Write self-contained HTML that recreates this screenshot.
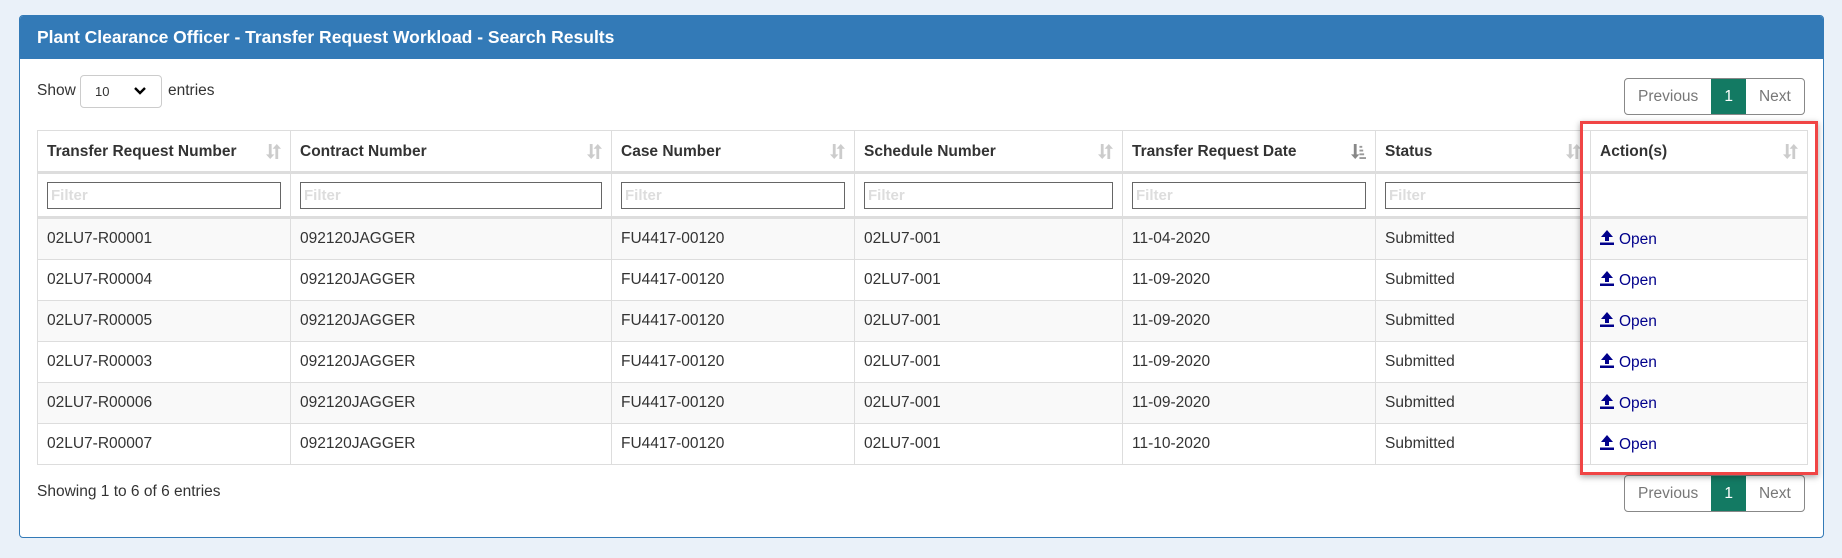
<!DOCTYPE html>
<html><head><style>
body{margin:0;width:1842px;height:558px;background:#eaf1f9;font-family:"Liberation Sans",Arial,sans-serif;position:relative;overflow:hidden;color:#333}
.panel{position:absolute;left:19px;top:15px;width:1803px;height:521px;background:#fff;border:1px solid #337ab7;border-radius:4px;overflow:hidden}
.ph{height:43px;background:#337ab7;color:#fff;font-weight:bold;font-size:17.5px;line-height:43px;padding-left:17px}
.abs{position:absolute}
.show{left:17px;top:66px;font-size:15.5px}
.sel{left:60px;top:59px;width:80px;height:31px;border:1px solid #ccc;border-radius:4px;font-size:13px}
.pg{display:flex;border:1px solid #888;border-radius:4px;overflow:hidden;height:35px;font-size:15.5px;line-height:35px;color:#777}
.pg div{padding:0 13px}
.pg .a{background:#137a63;color:#fff;padding:0 13px}
table{position:absolute;left:17px;top:114px;border-collapse:collapse;table-layout:fixed;width:1770px;font-size:15.5px}
td,th{border:1px solid #ddd;padding:0 9px;text-align:left;white-space:nowrap;overflow:hidden}
th{height:39px;font-weight:bold;position:relative;border-bottom:3px solid #ddd;padding-top:1px}
th .s{position:absolute;right:9px;top:12px}
tr.f td{height:42px;border-bottom:3px solid #ddd}
.in{height:25px;border:1px solid #666;color:#ddd;font-weight:bold;font-size:15px;line-height:26px;padding-left:3px}
tbody tr td{height:40px}
tbody tr:nth-child(odd) td{background:#f9f9f9}
a{color:#00008b;text-decoration:none}
a svg{vertical-align:-1px;margin-right:5px}
.red{position:absolute;left:1580px;top:121px;width:232px;height:348px;border:3px solid #f04545;box-shadow:0 2px 6px rgba(0,0,0,.35)}
</style></head><body>
<svg width="0" height="0" style="position:absolute"><defs>
<symbol id="sr" viewBox="0 0 16 18"><path d="M3 1h3v11h3l-4.5 5L0 12h3z" fill="#ccc"/><path d="M10 17h3V6h3L11.5 1 7 6h3z" fill="#ccc"/></symbol>
<symbol id="sd" viewBox="0 0 16 18"><path d="M3 1h3v11h3l-4.5 5L0 12h3z" fill="#888"/><path d="M9 3h3v2H9zM9 7h4v2H9zM9 11h5v2H9zM9 15h7v2H9z" fill="#999"/></symbol>
<symbol id="up" viewBox="0 0 14 15"><path d="M7 0L13 7H9v4H5V7H1z M0 12.5h14V15H0z" fill="#00008b"/></symbol>
</defs></svg>
<div class="panel">
<div class="ph">Plant Clearance Officer - Transfer Request Workload - Search Results</div>
<div class="abs show">Show</div>
<div class="abs sel"><span style="position:absolute;left:14px;top:8px">10</span><svg style="position:absolute;left:52px;top:10px" width="14" height="10" viewBox="0 0 14 10"><path d="M2 2l5 5 5-5" stroke="#000" stroke-width="2.4" fill="none"/></svg></div>
<div class="abs show" style="left:148px">entries</div>
<div class="abs pg" style="left:1604px;top:62px"><div>Previous</div><div class="a">1</div><div>Next</div></div>
<table>
<colgroup><col style="width:253px"><col style="width:321px"><col style="width:243px"><col style="width:268px"><col style="width:253px"><col style="width:215px"><col style="width:217px"></colgroup>
<thead><tr><th>Transfer Request Number<svg class="s" width="15" height="17"><use href="#sr"/></svg></th><th>Contract Number<svg class="s" width="15" height="17"><use href="#sr"/></svg></th><th>Case Number<svg class="s" width="15" height="17"><use href="#sr"/></svg></th><th>Schedule Number<svg class="s" width="15" height="17"><use href="#sr"/></svg></th><th>Transfer Request Date<svg class="s" width="15" height="17"><use href="#sd"/></svg></th><th>Status<svg class="s" width="15" height="17"><use href="#sr"/></svg></th><th>Action(s)<svg class="s" width="15" height="17"><use href="#sr"/></svg></th></tr>
<tr class="f"><td><div class="in">Filter</div></td><td><div class="in">Filter</div></td><td><div class="in">Filter</div></td><td><div class="in">Filter</div></td><td><div class="in">Filter</div></td><td><div class="in">Filter</div></td><td></td></tr></thead>
<tbody>
<tr><td>02LU7-R00001</td><td>092120JAGGER</td><td>FU4417-00120</td><td>02LU7-001</td><td>11-04-2020</td><td>Submitted</td><td><a><svg width="14" height="15"><use href="#up"/></svg>Open</a></td></tr>
<tr><td>02LU7-R00004</td><td>092120JAGGER</td><td>FU4417-00120</td><td>02LU7-001</td><td>11-09-2020</td><td>Submitted</td><td><a><svg width="14" height="15"><use href="#up"/></svg>Open</a></td></tr>
<tr><td>02LU7-R00005</td><td>092120JAGGER</td><td>FU4417-00120</td><td>02LU7-001</td><td>11-09-2020</td><td>Submitted</td><td><a><svg width="14" height="15"><use href="#up"/></svg>Open</a></td></tr>
<tr><td>02LU7-R00003</td><td>092120JAGGER</td><td>FU4417-00120</td><td>02LU7-001</td><td>11-09-2020</td><td>Submitted</td><td><a><svg width="14" height="15"><use href="#up"/></svg>Open</a></td></tr>
<tr><td>02LU7-R00006</td><td>092120JAGGER</td><td>FU4417-00120</td><td>02LU7-001</td><td>11-09-2020</td><td>Submitted</td><td><a><svg width="14" height="15"><use href="#up"/></svg>Open</a></td></tr>
<tr><td>02LU7-R00007</td><td>092120JAGGER</td><td>FU4417-00120</td><td>02LU7-001</td><td>11-10-2020</td><td>Submitted</td><td><a><svg width="14" height="15"><use href="#up"/></svg>Open</a></td></tr>
</tbody></table>
<div class="abs" style="left:17px;top:467px;font-size:15.5px">Showing 1 to 6 of 6 entries</div>
<div class="abs pg" style="left:1604px;top:459px"><div>Previous</div><div class="a">1</div><div>Next</div></div>
</div>
<div class="red"></div>
</body></html>
